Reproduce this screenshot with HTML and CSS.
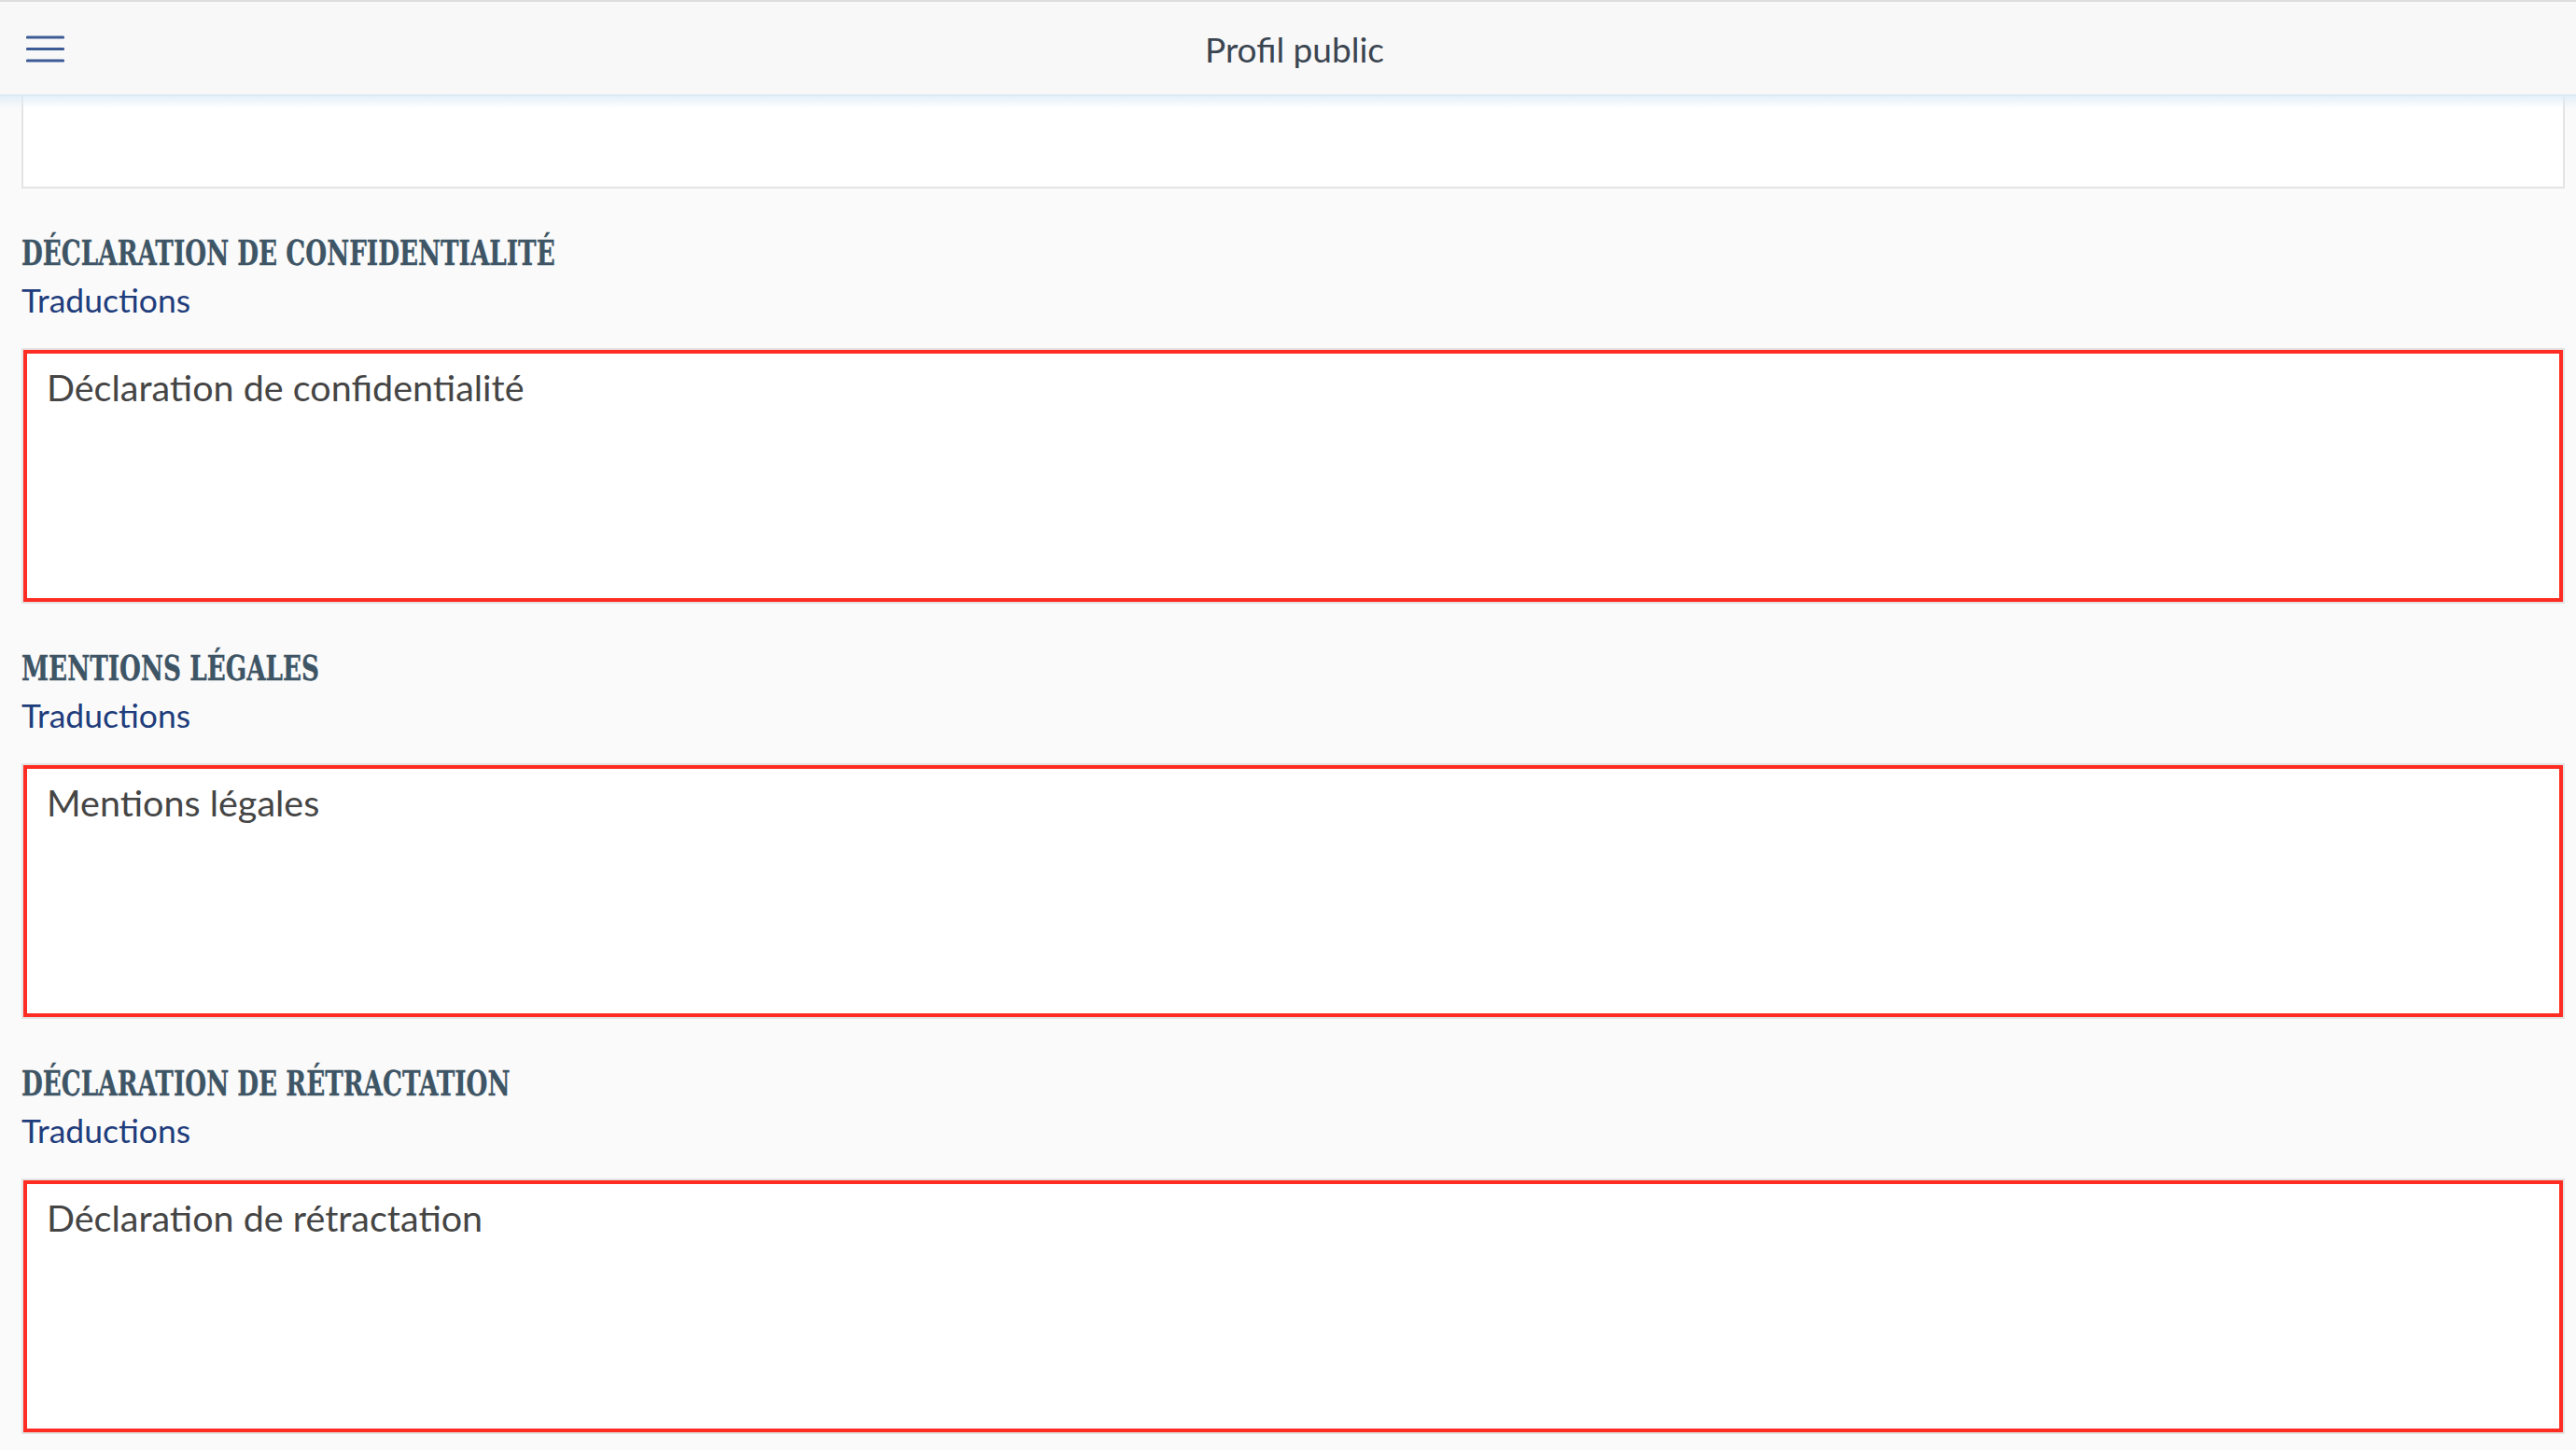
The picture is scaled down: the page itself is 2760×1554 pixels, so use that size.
FILE: index.html
```html
<!DOCTYPE html>
<html lang="fr">
<head>
<meta charset="utf-8">
<title>Profil public</title>
<link rel="stylesheet" href="styles.css">
</head>
<body>
<header class="topbar">
  <button class="menu-btn" type="button" aria-label="Menu">
    <svg class="menu-icon" width="41" height="30" viewBox="0 0 41 30" aria-hidden="true">
      <line x1="1.5" y1="2" x2="39.5" y2="2"/>
      <line x1="1.5" y1="14.5" x2="39.5" y2="14.5"/>
      <line x1="1.5" y1="27" x2="39.5" y2="27"/>
    </svg>
  </button>
  <h1 class="topbar-title">Profil public</h1>
  <span class="topbar-spacer"></span>
</header>
<main class="content">
  <div class="field field--prev"></div>

  <section class="block">
    <h2 class="block-title">DÉCLARATION DE CONFIDENTIALITÉ</h2>
    <a class="block-link" href="#">Traductions</a>
    <div class="field field--flag">Déclaration de confidentialité</div>
  </section>

  <section class="block">
    <h2 class="block-title">MENTIONS LÉGALES</h2>
    <a class="block-link" href="#">Traductions</a>
    <div class="field field--flag">Mentions légales</div>
  </section>

  <section class="block">
    <h2 class="block-title">DÉCLARATION DE RÉTRACTATION</h2>
    <a class="block-link" href="#">Traductions</a>
    <div class="field field--flag">Déclaration de rétractation</div>
  </section>
</main>
</body>
</html>
```
FILE: styles.css
```css
* {
  box-sizing: border-box;
}

html, body {
  margin: 0;
  padding: 0;
}

body {
  background: #fafafa;
  font-family: Lato, "Open Sans", sans-serif;
  color: #444;
  overflow: hidden;
}

.topbar {
  position: relative;
  z-index: 2;
  display: grid;
  grid-template-columns: 1fr auto 1fr;
  align-items: center;
  height: 103px;
  padding: 3px 14px 0 28px;
  background: #f8f8f8;
  border-top: 2px solid #dddddd;
  border-bottom: 2px solid #dcdcdc;
}

.topbar::after {
  content: "";
  position: absolute;
  left: 0;
  right: 0;
  top: 100%;
  height: 15px;
  background: linear-gradient(to bottom, rgba(222, 237, 248, 0.95), rgba(240, 248, 252, 0));
  pointer-events: none;
}

.menu-btn {
  justify-self: start;
  display: flex;
  padding: 0;
  margin: 0;
  border: 0;
  background: none;
  cursor: pointer;
}

.menu-icon line {
  stroke: #3d5b95;
  stroke-width: 3.2;
  stroke-linecap: round;
}

.topbar-title {
  margin: 0;
  font-family: Lato, "Open Sans", sans-serif;
  font-weight: 400;
  font-size: 37px;
  line-height: 44px;
  color: #3b4551;
}

.content {
  display: flex;
  flex-direction: column;
  padding: 0 12px 0 23px;
}

.field {
  background: #ffffff;
  border: 2px solid #e4e4e4;
}

.field--prev {
  height: 99px;
  border-top: 0;
}

.block {
  display: flex;
  flex-direction: column;
  align-items: flex-start;
  padding-top: 49px;
}

.block-title {
  margin: 0 0 9px;
  font-family: "DejaVu Serif Condensed", "DejaVu Serif", serif;
  font-stretch: condensed;
  font-weight: 700;
  font-size: 37px;
  line-height: 40px;
  color: #3e5566;
  white-space: nowrap;
  -webkit-text-stroke: 0.3px #3e5566;
  transform: scaleX(0.79);
  transform-origin: 0 50%;
}

.block-link {
  margin: 0 0 29px;
  font-size: 35.5px;
  line-height: 44px;
  color: #1f3d7c;
  text-decoration: none;
}

.field--flag {
  align-self: stretch;
  height: 274px;
  padding: 16px 25px;
  font-size: 39.5px;
  line-height: 48px;
  color: #454545;
  box-shadow: inset 0 0 0 4px #fe2c22;
}
```
